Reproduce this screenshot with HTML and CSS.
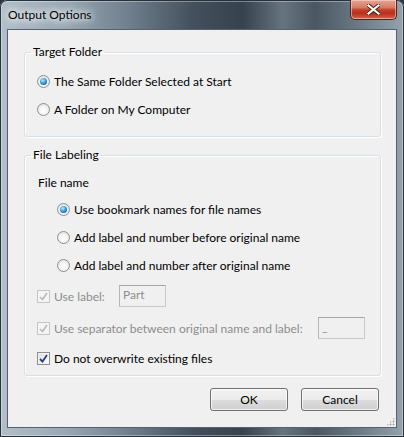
FILE: index.html
```html
<!DOCTYPE html>
<html>
<head>
<meta charset="utf-8">
<link rel="stylesheet" href="styles.css">
</head>
<body>
<div class="window">
  <div class="titlebar">
    <span class="title">Output Options</span>
    <div class="close">
      <svg width="13" height="11" viewBox="0 0 13 11">
        <path d="M1.5 1.5 L11.5 9.5 M11.5 1.5 L1.5 9.5" stroke="#3a1a14" stroke-width="4" stroke-linecap="square" fill="none"/>
        <path d="M1.5 1.5 L11.5 9.5 M11.5 1.5 L1.5 9.5" stroke="#ffffff" stroke-width="2.2" stroke-linecap="square" fill="none"/>
      </svg>
    </div>
  </div>
  <div class="client">
    <fieldset class="group g1">
      <legend>Target Folder</legend>
      <div class="row"><span class="radio on"></span><span>The Same Folder Selected at Start</span></div>
      <div class="row"><span class="radio"></span><span>A Folder on My Computer</span></div>
    </fieldset>
    <fieldset class="group g2">
      <legend>File Labeling</legend>
      <div class="subhead">File name</div>
      <div class="row indent"><span class="radio on"></span><span>Use bookmark names for file names</span></div>
      <div class="row indent"><span class="radio"></span><span>Add label and number before original name</span></div>
      <div class="row indent"><span class="radio"></span><span>Add label and number after original name</span></div>
      <div class="row r-label disabled">
        <span class="check dis"><svg width="9" height="9" viewBox="0 0 9 9"><path d="M1 5 L3.5 7.5 L8 1" stroke="#b9b9b9" stroke-width="1.6" fill="none"/></svg></span>
        <span class="lbl w-label">Use label:</span>
        <span class="field">Part</span>
      </div>
      <div class="row r-sep disabled">
        <span class="check dis"><svg width="9" height="9" viewBox="0 0 9 9"><path d="M1 5 L3.5 7.5 L8 1" stroke="#b9b9b9" stroke-width="1.6" fill="none"/></svg></span>
        <span class="lbl w-sep">Use separator between original name and label:</span>
        <span class="field">_</span>
      </div>
      <div class="row r-over">
        <span class="check on"><svg width="9" height="9" viewBox="0 0 9 9"><path d="M1 5 L3.5 7.5 L8 1" stroke="#2a3a8c" stroke-width="1.8" fill="none"/></svg></span>
        <span class="lbl">Do not overwrite existing files</span>
      </div>
    </fieldset>
    <div class="buttons">
      <button class="btn">OK</button>
      <button class="btn">Cancel</button>
    </div>
    <div class="grip"></div>
  </div>
</div>
</body>
</html>
```

FILE: styles.css
```css
* { box-sizing: border-box; }
html, body { margin: 0; padding: 0; background: #2a3440; }
body { font-family: "Lato", "Segoe UI", sans-serif; font-size: 12px; color: #000; }

.window {
  width: 404px;
  height: 437px;
  border-radius: 7px 7px 0 0;
  background:
    linear-gradient(90deg, #b2bfca 0%, #98a8b5 16%, #6f7f8d 32%, #434f5c 48%, #36424e 60%, #66747f 70%, #4a5763 78%, #6f7e8a 90%, #95a3ae 100%);
  box-shadow: inset 0 0 0 1px #27313b, inset 0 0 0 2px rgba(255,255,255,0.35);
  display: flex;
  flex-direction: column;
  overflow: hidden;
}

.titlebar {
  height: 29px;
  display: flex;
  justify-content: space-between;
  align-items: flex-start;
  padding: 0 7px 0 8px;
}
.title {
  line-height: 29px;
  font-size: 12px;
  color: #000;
  text-shadow: 0 0 6px #fff, 0 0 10px #fff, 0 0 14px rgba(255,255,255,0.8);
}
.close {
  width: 47px;
  height: 20px;
  border: 1px solid #4a2620;
  border-top: none;
  border-radius: 0 0 5px 5px;
  background: linear-gradient(180deg, #e4a595 0%, #d67a63 40%, #c3402a 52%, #b8301c 70%, #d4644a 100%);
  box-shadow: inset 0 0 0 1px rgba(255,220,210,0.55);
  display: flex;
  align-items: center;
  justify-content: center;
}

.client {
  position: relative;
  margin: 0 7px;
  height: 399px;
  background: #f0f0f0;
  border: 1px solid #56626e;
  display: flex;
  flex-direction: column;
}

.group {
  margin: 14px 15px 0 16px;
  padding: 7px 12px 13px 12px;
  border: 1px solid #d5dfe5;
  border-radius: 3px;
  box-shadow: inset 1px 1px 0 #fff, 1px 1px 0 #fff;
  min-width: 0;
}
.group legend {
  margin-left: -6px;
  padding: 0 2px;
  line-height: 16px;
  height: 16px;
}
.g2 {
  margin-top: 10px;
  padding: 8px 12px 3px 12px;
}

.row {
  height: 28px;
  display: flex;
  align-items: center;
  white-space: nowrap;
}
.subhead {
  height: 24px;
  line-height: 24px;
  padding-left: 1px;
}
.indent { padding-left: 20px; }

.radio {
  width: 13px;
  height: 13px;
  border-radius: 50%;
  border: 1px solid #8e8f8f;
  background: radial-gradient(circle at 50% 60%, #ffffff 0%, #f4f4f4 45%, #d6d6d6 100%);
  margin-right: 4px;
  flex: none;
  display: flex;
  align-items: center;
  justify-content: center;
}
.radio.on::after {
  content: "";
  width: 7px;
  height: 7px;
  border-radius: 50%;
  background: radial-gradient(circle at 40% 35%, #b9ecff 0%, #4fb3ea 35%, #1d6cb8 70%, #123f7a 100%);
}

.check {
  width: 13px;
  height: 13px;
  border: 1px solid #8e8f8f;
  background: linear-gradient(135deg, #dcdcdc 0%, #f6f6f6 70%, #ffffff 100%);
  box-shadow: inset 0 0 0 1px #f4f4f4;
  margin-right: 4px;
  flex: none;
  display: flex;
  align-items: center;
  justify-content: center;
}
.check.dis {
  border-color: #c6c6c6;
  background: #f4f4f4;
}
.disabled { color: #8d8d8d; }

.r-label { margin-top: 3px; }
.r-sep { margin-top: 4px; }
.r-over { margin-top: 2px; }

.w-label { width: 65px; }
.w-sep { width: 264px; }

.field {
  width: 47px;
  height: 22px;
  border: 1px solid #c9c9c9;
  border-top-color: #a5a5a5;
  border-left-color: #b5b5b5;
  background: #f0f0f0;
  color: #8d8d8d;
  padding: 0 3px;
  line-height: 18px;
  flex: none;
}

.buttons {
  display: flex;
  justify-content: flex-end;
  gap: 13px;
  margin: 12px 17px 0 0;
}
.btn {
  width: 78px;
  height: 23px;
  font: inherit;
  color: #000;
  border: 1px solid #707070;
  border-radius: 3px;
  background: linear-gradient(180deg, #f2f2f2 0%, #ebebeb 50%, #dddddd 51%, #cfcfcf 100%);
  box-shadow: inset 0 0 0 1px rgba(255,255,255,0.7);
  padding: 0;
}

.grip {
  position: absolute;
  right: 1px;
  bottom: 1px;
  width: 9px;
  height: 9px;
  background:
    radial-gradient(circle, #a8a8a8 0.9px, transparent 1.1px) 0 0 / 3px 3px;
  clip-path: polygon(100% 0, 100% 100%, 0 100%);
}
```
